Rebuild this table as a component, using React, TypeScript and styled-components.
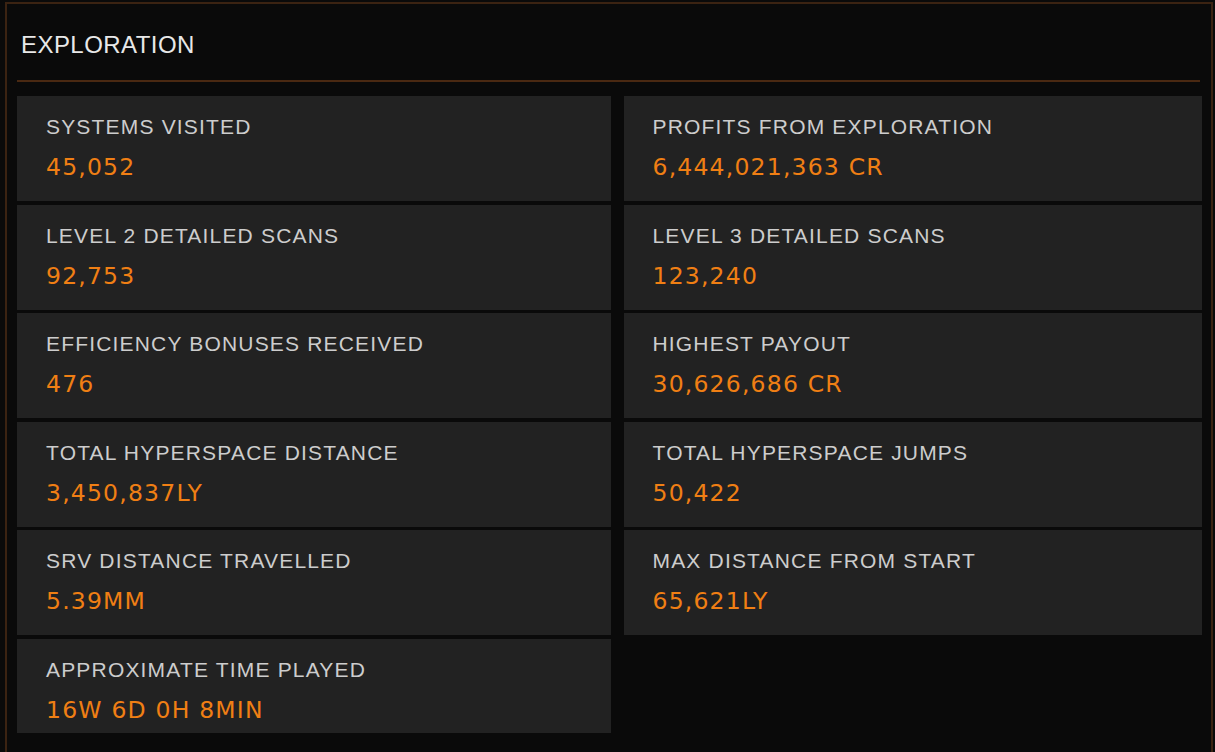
import React from "react";
import styled, { createGlobalStyle } from "styled-components";

const Global = createGlobalStyle`
  html, body {
    margin: 0;
    padding: 0;
    background: #0a0a0a;
  }
  body {
    font-family: "Liberation Sans", Arial, sans-serif;
  }
`;

const Panel = styled.section`
  box-sizing: border-box;
  margin: 2px 0 0 5px;
  width: 1208px;
  min-height: 750px;
  border: 2px solid #3b2312;
  border-bottom: none;
  padding: 0 10px 18px;
  background: #0a0a0a;
`;

const Header = styled.header`
  padding: 27px 0 21px 4px;
  border-bottom: 2px solid #4a2912;
  margin-right: 1px;
`;

const Title = styled.h1`
  margin: 0;
  font-size: 24px;
  line-height: 28px;
  font-weight: 400;
  letter-spacing: 0.45px;
  color: #e8e8e8;
`;

const Grid = styled.div`
  margin-top: 14px;
  display: grid;
  grid-template-columns: 594px 578px;
  column-gap: 12.5px;
  row-gap: 3.6px;
`;

const Card = styled.div<{ $short?: boolean }>`
  box-sizing: border-box;
  height: ${(p) => (p.$short ? "94.5px" : "105px")};
  background: #222222;
  padding: 18px 28px 0 29px;
`;

const Label = styled.div`
  font-size: 21px;
  line-height: 25px;
  letter-spacing: 1.18px;
  color: #cdcdcd;
  white-space: nowrap;
`;

const Value = styled.div`
  margin-top: 14px;
  font-family: "DejaVu Sans", "Liberation Sans", sans-serif;
  font-size: 23.5px;
  line-height: 28px;
  letter-spacing: 1.2px;
  color: #f07f14;
  white-space: nowrap;
`;

const stats: [string, string][] = [
  ["SYSTEMS VISITED", "45,052"],
  ["PROFITS FROM EXPLORATION", "6,444,021,363 CR"],
  ["LEVEL 2 DETAILED SCANS", "92,753"],
  ["LEVEL 3 DETAILED SCANS", "123,240"],
  ["EFFICIENCY BONUSES RECEIVED", "476"],
  ["HIGHEST PAYOUT", "30,626,686 CR"],
  ["TOTAL HYPERSPACE DISTANCE", "3,450,837LY"],
  ["TOTAL HYPERSPACE JUMPS", "50,422"],
  ["SRV DISTANCE TRAVELLED", "5.39MM"],
  ["MAX DISTANCE FROM START", "65,621LY"],
  ["APPROXIMATE TIME PLAYED", "16W 6D 0H 8MIN"],
];

export default function App() {
  return (
    <>
      <Global />
      <Panel>
        <Header>
          <Title>EXPLORATION</Title>
        </Header>
        <Grid>
          {stats.map(([label, value], i) => (
            <Card key={label} $short={i === stats.length - 1}>
              <Label>{label}</Label>
              <Value>{value}</Value>
            </Card>
          ))}
        </Grid>
      </Panel>
    </>
  );
}
